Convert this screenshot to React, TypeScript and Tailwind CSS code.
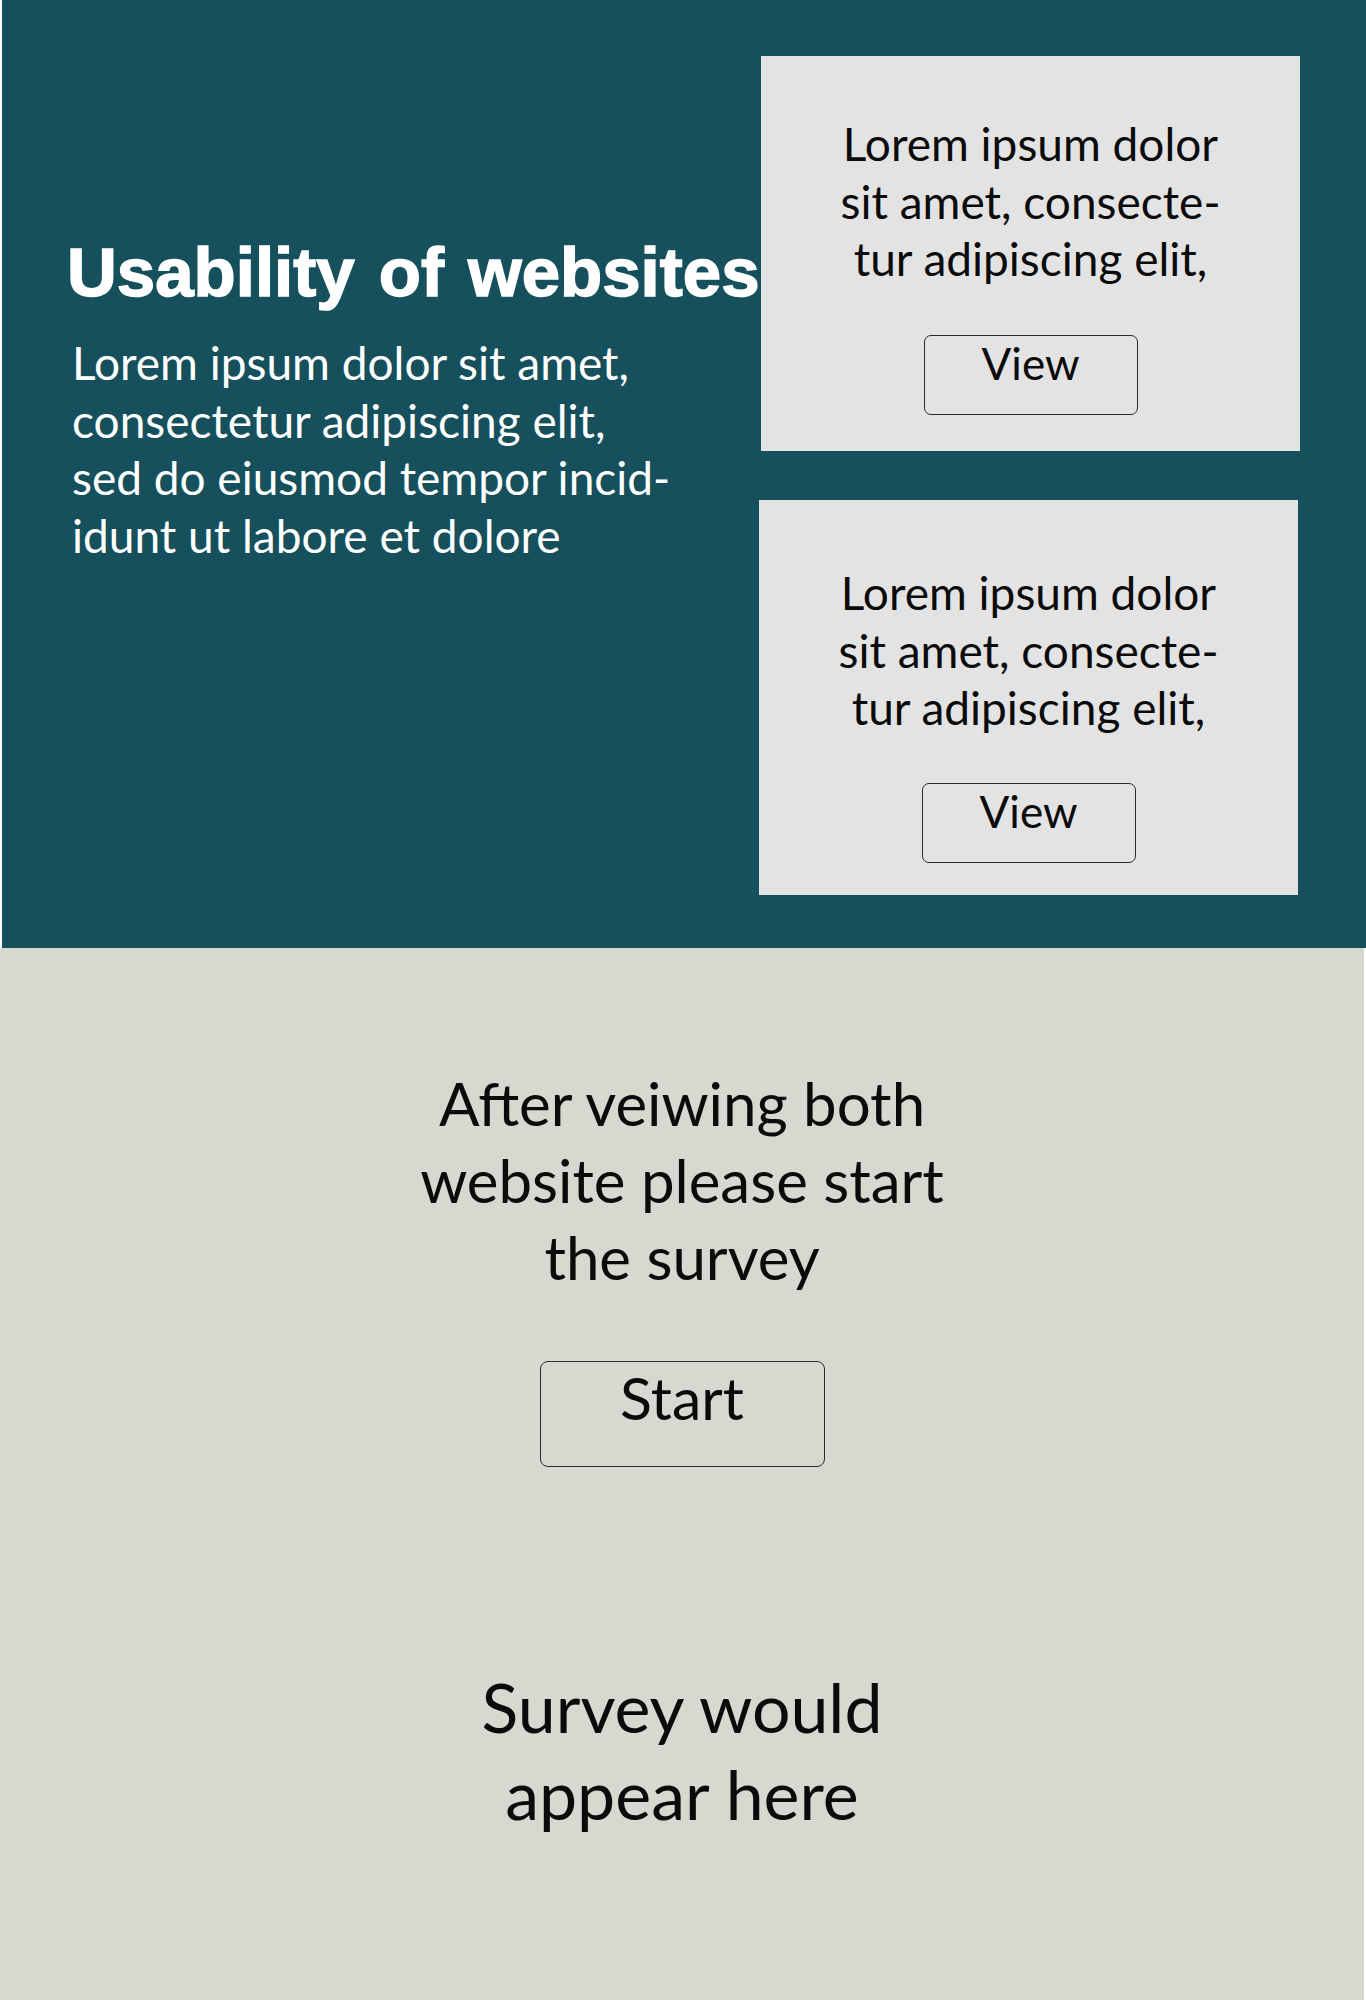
import React from "react";

function Card({ top, pt, gap, shift }: { top: string; pt: string; gap: string; shift: string }) {
  return (
    <div
      className={`${top} ${shift} w-[539px] h-[395px] bg-[#e3e3e3] flex flex-col items-center ${pt}`}
    >
      <p className="font-['Lato',sans-serif] text-[46px] leading-[57.5px] text-[#0b0b0b] text-center">
        Lorem ipsum dolor
        <br />
        sit amet, consecte-
        <br />
        tur adipiscing elit,
      </p>
      <button
        className={`${gap} w-[214px] h-[80px] border border-[#2b2b2b] rounded-[7px] flex justify-center items-start pt-0 font-['Lato',sans-serif] text-[44px] leading-[54px] text-[#0b0b0b]`}
      >
        View
      </button>
    </div>
  );
}

export default function App() {
  return (
    <div className="w-[1366px] h-[2000px] bg-white">
      <section className="ml-[2px] w-[1364px] h-[948px] bg-[#16505c] flex">
        <div className="w-[757px] pl-[65px] pt-[233px]">
          <h1 className="font-['Liberation_Sans',Arial,sans-serif] font-bold text-[69px] leading-[80px] [word-spacing:5px] text-white whitespace-nowrap [-webkit-text-stroke:1.5px_white]">
            Usability of websites
          </h1>
          <p className="ml-[5px] mt-[21px] font-['Lato',sans-serif] text-[46px] leading-[57.5px] text-white">
            Lorem ipsum dolor sit amet,
            <br />
            consectetur adipiscing elit,
            <br />
            sed do eiusmod tempor incid-
            <br />
            idunt ut labore et dolore
          </p>
        </div>
        <div className="flex flex-col">
          <Card top="mt-[56px]" shift="ml-[2px]" pt="pt-[59px]" gap="mt-[47px]" />
          <Card top="mt-[49px]" shift="ml-0" pt="pt-[64px]" gap="mt-[46px]" />
        </div>
      </section>
      <section className="w-[1364px] h-[1052px] bg-[#d7d8cf] flex flex-col items-center pt-[117px] font-['Lato',sans-serif] text-[#0b0b0b]">
        <p className="text-[60px] leading-[77px] text-center">
          After veiwing both
          <br />
          website please start
          <br />
          the survey
        </p>
        <button className="mt-[65px] w-[285px] h-[106px] border border-[#2b2b2b] rounded-[8px] flex justify-center items-start pt-[1px] text-[59px] leading-[70px]">
          Start
        </button>
        <p className="mt-[196px] text-[68px] leading-[87px] text-center">
          Survey would
          <br />
          appear here
        </p>
      </section>
    </div>
  );
}
